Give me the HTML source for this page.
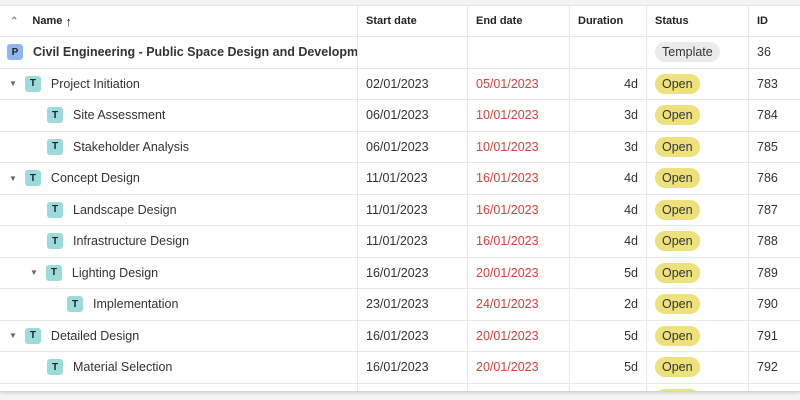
<!DOCTYPE html>
<html><head><style>
*{margin:0;padding:0;box-sizing:border-box}
body{width:800px;height:400px;overflow:hidden;background:#f3f3f3;font-family:"Liberation Sans",sans-serif;font-size:12.5px;color:#333;position:relative}
#t{position:absolute;left:0;top:5px;width:800px;height:386px;background:#fff;overflow:hidden;border-top:1px solid #e6e6e6;box-shadow:0 2px 3px rgba(0,0,0,.15)}
.r{position:absolute;left:0;width:800px;height:31.5px;border-bottom:1px solid #e8e8e8}
.c{position:absolute;top:0;height:100%;display:flex;align-items:center;border-right:1px solid #e6e6e6}
.h{font-weight:bold;font-size:11px;color:#222}
.red{color:#d9413c}
.b{flex:0 0 16px;width:16px;height:16px;border-radius:3px;background:#9bdbdb;display:inline-flex;align-items:center;justify-content:center;font-size:10px;font-weight:bold;color:#222;margin-right:10px}
.p{background:#8fb8f0}
.pill{background:#ece17a;border-radius:10px;padding:3px 7px;font-size:12.5px}
.tpl{background:#ebebeb}
.tri{font-size:8px;color:#666;margin-right:8px}
</style></head><body><div id="t">
<div class="r" style="top:0;height:31px">
<div class="c h" style="left:0;width:358px"><span style="margin:0 14px 0 10px;color:#888;font-size:10px">⌃</span>Name&nbsp;<span style="font-size:13px">↑</span></div>
<div class="c h" style="left:358px;width:110px;padding-left:8px">Start date</div>
<div class="c h" style="left:468px;width:102px;padding-left:8px">End date</div>
<div class="c h" style="left:570px;width:77px;padding-left:8px">Duration</div>
<div class="c h" style="left:647px;width:102px;padding-left:8px">Status</div>
<div class="c h" style="left:749px;width:51px;padding-left:8px;border:0">ID</div>
</div>
<div id="rows"></div>
</div>
<script>
var d=[
[0,'P','Civil Engineering - Public Space Design and Development','','','','Template','36',0],
[1,'T','Project Initiation','02/01/2023','05/01/2023','4d','Open','783',1],
[2,'T','Site Assessment','06/01/2023','10/01/2023','3d','Open','784',0],
[2,'T','Stakeholder Analysis','06/01/2023','10/01/2023','3d','Open','785',0],
[1,'T','Concept Design','11/01/2023','16/01/2023','4d','Open','786',1],
[2,'T','Landscape Design','11/01/2023','16/01/2023','4d','Open','787',0],
[2,'T','Infrastructure Design','11/01/2023','16/01/2023','4d','Open','788',0],
[2,'T','Lighting Design','16/01/2023','20/01/2023','5d','Open','789',1],
[3,'T','Implementation','23/01/2023','24/01/2023','2d','Open','790',0],
[1,'T','Detailed Design','16/01/2023','20/01/2023','5d','Open','791',1],
[2,'T','Material Selection','16/01/2023','20/01/2023','5d','Open','792',0],
[2,'T','','','','','Open','',0]];
var h='';
d.forEach(function(r,i){
var top=31+31.5*i;
var lvl=r[0];
var pad=lvl==0?7:(lvl==1?9:(lvl==2?(r[8]?30:47):67));
var name=lvl==0?'<span class="b p">P</span><b style="font-size:12.5px;white-space:nowrap">'+r[2]+'</b>':
(r[8]?'<span class="tri">▼</span>':'')+'<span class="b">T</span>'+r[2];
h+='<div class="r" style="top:'+top+'px">'+
'<div class="c" style="left:0;width:358px;padding-left:'+pad+'px;overflow:hidden">'+name+'</div>'+
'<div class="c" style="left:358px;width:110px;padding-left:8px">'+r[3]+'</div>'+
'<div class="c red" style="left:468px;width:102px;padding-left:8px">'+r[4]+'</div>'+
'<div class="c" style="left:570px;width:77px;padding-right:8px;justify-content:flex-end">'+r[5]+'</div>'+
'<div class="c" style="left:647px;width:102px;padding-left:8px"><span class="pill'+(r[6]=='Template'?' tpl':'')+'">'+r[6]+'</span></div>'+
'<div class="c" style="left:749px;width:51px;padding-left:8px;border:0">'+r[7]+'</div></div>';
});
document.getElementById('rows').innerHTML=h;
</script>
</body></html>
